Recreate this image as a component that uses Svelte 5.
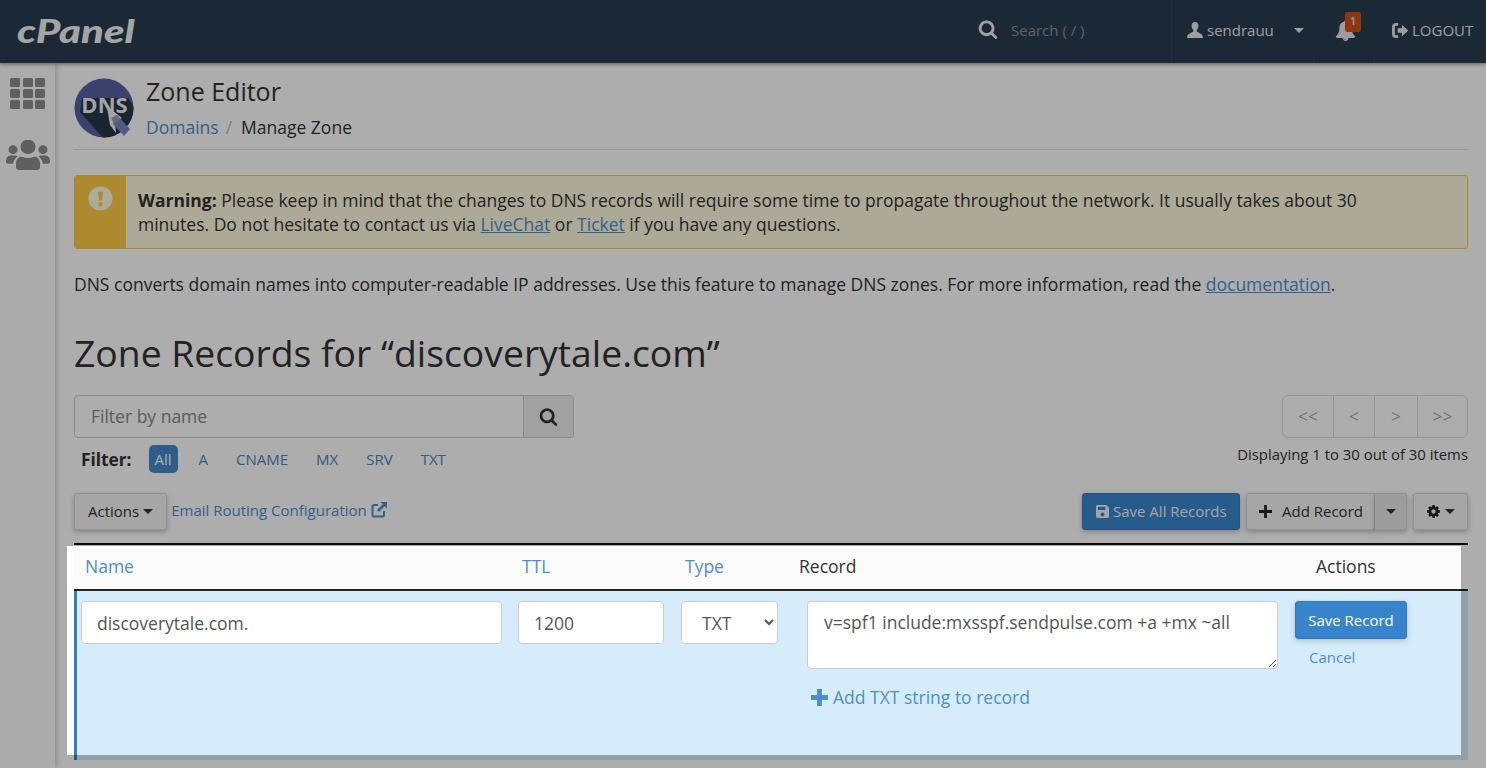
<script>
  const filters = ['A', 'CNAME', 'MX', 'SRV', 'TXT'];
  const pages = ['<<', '<', '>', '>>'];
</script>

<div class="page">
  <header class="nav">
    <span class="logo-wrap"><span class="logo">cPanel</span></span>
    <div class="nav-search">
      <svg class="i-search" viewBox="0 0 1792 1792"><path d="M1216 832q0-185-131.500-316.500t-316.500-131.500-316.500 131.500-131.500 316.500 131.500 316.500 316.500 131.500 316.500-131.500 131.500-316.500zm512 832q0 52-38 90t-90 38q-54 0-90-38l-343-342q-179 124-399 124-143 0-273.500-55.500t-225-150-150-225-55.500-273.500 55.500-273.500 150-225 225-150 273.500-55.500 273.500 55.500 225 150 150 225 55.500 273.500q0 220-124 399l343 343q37 37 37 90z"/></svg>
      <span class="search-ph">Search ( / )</span>
    </div>
    <div class="nav-user">
      <svg class="i-user" viewBox="0 0 16 16"><path d="M8 0C5.800 0 4.600 1.500 4.600 3.800c0 1.700.6 3.100 1.500 4 .3.400.3 1.300 0 1.700C5 10.700 1.200 11.600.6 13.500L0 16h16l-.6-2.500c-.6-1.900-4.400-2.800-5.500-4-.3-.4-.3-1.300 0-1.700.9-.9 1.500-2.300 1.500-4C11.400 1.500 10.200 0 8 0z"/></svg>
      <span>sendrauu</span>
      <i class="caret user-caret"></i>
    </div>
    <div class="nav-bell">
      <svg class="i-bell" viewBox="0 0 1792 1792"><path d="M912 1696q0-16-16-16-59 0-101.500-42.500t-42.500-101.500q0-16-16-16t-16 16q0 73 51.500 124.500t124.500 51.500q16 0 16-16zm816-288q0 52-38 90t-90 38h-448q0 106-75 181t-181 75-181-75-75-181h-448q-52 0-90-38t-38-90q50-42 91-88t85-119.500 74.500-158.500 50-206 19.500-260q0-152 117-282.500t307-158.500q-8-19-8-39 0-40 28-68t68-28 68 28 28 68q0 20-8 39 190 28 307 158.500t117 282.500q0 139 19.500 260t50 206 74.500 158.500 85 119.500 91 88z"/></svg>
      <span class="badge">1</span>
    </div>
    <div class="nav-logout">
      <svg class="i-logout" viewBox="0 0 18 16"><path d="M6.500 1.500H4A2.500 2.500 0 0 0 1.500 4v8A2.500 2.500 0 0 0 4 14.500h2.500" fill="none" stroke="currentColor" stroke-width="3"/><path d="M10.500 2 17.500 8l-7 6v-3.500H6v-5h4.500z"/></svg>
      <span>LOGOUT</span>
    </div>
  </header>

  <div class="shell">
    <aside class="side">
      <div class="grid-icon">
        {#each Array(9) as _}<i></i>{/each}
      </div>
      <svg class="i-users" viewBox="0 0 44 31" preserveAspectRatio="none"><circle cx="22" cy="7" r="7.500"/><circle cx="7" cy="10" r="4.500"/><circle cx="37" cy="10" r="4.500"/><path d="M13 31c-2 0-3-1-3-3v-4c0-4 3-7 6-7 1.500 1 3.500 1.700 6 1.700s4.500-.7 6-1.700c3 0 6 3 6 7v4c0 2-1 3-3 3z"/><path d="M0 22c0-4 2-6 5-6h4c1 0 2 .4 2.800 1-2.800 1.500-4.300 4-4.500 7.500H2c-1.300 0-2-1-2-2.500z"/><path d="M44 22c0-4-2-6-5-6h-4c-1 0-2 .4-2.800 1 2.800 1.500 4.300 4 4.500 7.500H42c1.300 0 2-1 2-2.500z"/></svg>
    </aside>

    <main class="main">
      <section class="head">
        <svg class="dns" viewBox="0 0 60 60">
          <defs><clipPath id="dnsc"><circle cx="30" cy="30" r="29.500"/></clipPath></defs>
          <circle cx="30" cy="30" r="29.500" fill="#56609f"/>
          <g clip-path="url(#dnsc)">
            <path d="M6 34 L8 20 L54 20 L62 32 L62 60 L29 60 Z" fill="#283746"/>
          </g>
          <text x="30.500" y="34.500" text-anchor="middle" class="dns-t">DNS</text>
          <path d="M33 29 L39 33 L48 40 L41 44 L42 55 L36 47z" fill="#f4f4f4"/>
          <path d="M43 37 L56 51 L50 58 L39 46z" fill="#7a86c4"/>
          <path d="M37 40 L43 37 L46 41 L40 46z" fill="#a0a0a0"/>
        </svg>
        <div class="head-text">
          <h2>Zone Editor</h2>
          <div class="crumbs"><a href="#d">Domains</a><span class="sep">/</span><span>Manage Zone</span></div>
        </div>
      </section>

      <section class="alert">
        <div class="alert-band">
          <svg viewBox="0 0 26 26"><circle cx="13" cy="13" r="12.500" fill="#fffbe4"/><path d="M10.600 6h4.800l-.8 9h-3.200zM11 17h4v4h-4z" fill="#ffcc44"/></svg>
        </div>
        <p class="alert-text"><b>Warning:</b> Please keep in mind that the changes to DNS records will require some time to propagate throughout the network. It usually takes about 30 minutes. Do not hesitate to contact us via <a href="#l">LiveChat</a> or <a href="#t">Ticket</a> if you have any questions.</p>
      </section>

      <p class="intro">DNS converts domain names into computer-readable IP addresses. Use this feature to manage DNS zones. For more information, read the <a href="#doc">documentation</a>.</p>

      <h1>Zone Records for “discoverytale.com”</h1>

      <section class="tools">
        <div class="tools-left">
          <div class="filter-box">
            <span class="filter-ph">Filter by name</span>
            <span class="filter-btn"><svg viewBox="0 0 1792 1792"><path d="M1216 832q0-185-131.500-316.500t-316.500-131.500-316.500 131.500-131.500 316.500 131.500 316.500 316.500 131.500 316.500-131.500 131.500-316.500zm512 832q0 52-38 90t-90 38q-54 0-90-38l-343-342q-179 124-399 124-143 0-273.500-55.500t-225-150-150-225-55.500-273.500 55.500-273.500 150-225 225-150 273.500-55.500 273.500 55.500 225 150 150 225 55.500 273.500q0 220-124 399l343 343q37 37 37 90z"/></svg></span>
          </div>
          <div class="filters">
            <b>Filter:</b>
            <span class="pill on">All</span>
            {#each filters as f}<span class="pill">{f}</span>{/each}
          </div>
        </div>
        <div class="tools-right">
          <div class="pager">{#each pages as p}<span>{p}</span>{/each}</div>
          <div class="count">Displaying 1 to 30 out of 30 items</div>
        </div>
      </section>

      <section class="actions">
        <span class="btn">Actions <i class="caret dark"></i></span>
        <a class="email" href="#e">Email Routing Configuration
          <svg viewBox="0 0 16 16"><path d="M7 3H3a1.500 1.500 0 0 0-1.500 1.500v8.500A1.500 1.500 0 0 0 3 14.500h8.500A1.500 1.500 0 0 0 13 13V9" fill="none" stroke="currentColor" stroke-width="2"/><path d="M9.500 0H16v6.500l-2.300-2.300-5.700 5.700-2-2 5.700-5.700z"/></svg>
        </a>
        <span class="spacer"></span>
        <span class="btn primary">
          <svg viewBox="0 0 14 14"><path fill-rule="evenodd" d="M1.500 0H11l3 3v9.500a1.500 1.500 0 0 1-1.500 1.500h-11A1.500 1.500 0 0 1 0 12.500v-11A1.500 1.500 0 0 1 1.500 0zM2 2v3.500h8V2zm5 6a2.200 2.200 0 1 0 0 4.400A2.200 2.200 0 0 0 7 8z"/></svg>
          Save All Records
        </span>
        <span class="split">
          <span class="btn add"><svg viewBox="0 0 14 14"><path d="M5.500 0h3v5.500H14v3H8.500V14h-3V8.500H0v-3h5.500z"/></svg>Add Record</span>
          <span class="btn more"><i class="caret dark"></i></span>
        </span>
        <span class="btn gear">
          <svg viewBox="0 0 1792 1792"><path d="M1152 896q0-106-75-181t-181-75-181 75-75 181 75 181 181 75 181-75 75-181zm512-109v222q0 12-8 23t-20 13l-185 28q-19 54-39 91 35 50 107 138 10 12 10 25t-9 23q-27 37-99 108t-94 71q-12 0-26-9l-138-108q-44 23-91 38-16 136-29 186-7 28-36 28h-222q-14 0-24.500-8.500t-11.500-21.500l-28-184q-49-16-90-37l-141 107q-10 9-25 9-14 0-25-11-126-114-165-168-7-10-7-23 0-12 8-23 15-21 51-66.500t54-70.500q-27-50-41-99l-183-27q-13-2-21-12.500t-8-23.500v-222q0-12 8-23t19-13l186-28q14-46 39-92-40-57-107-138-10-12-10-24 0-10 9-23 26-36 98.500-107.500t94.500-71.500q13 0 26 10l138 107q44-23 91-38 16-136 29-186 7-28 36-28h222q14 0 24.500 8.500t11.500 21.500l28 184q49 16 90 37l142-107q9-9 24-9 13 0 25 10 129 119 165 170 7 8 7 22 0 12-8 23-15 21-51 66.500t-54 70.500q26 50 41 98l183 28q13 2 21 12.500t8 23.500z"/></svg>
          <i class="caret dark"></i>
        </span>
      </section>

      <section class="records">
        <div class="base-head"></div>
        <div class="base-row"></div>

        <div class="spot">
          <div class="spot-inner">
            <div class="thead">
              <a href="#n" class="c-name">Name</a>
              <a href="#ttl" class="c-ttl">TTL</a>
              <a href="#ty" class="c-type">Type</a>
              <span class="c-rec">Record</span>
              <span class="c-act">Actions</span>
            </div>
            <div class="row">
              <input class="f-name" value="discoverytale.com." />
              <input class="f-ttl" value="1200" />
              <select class="f-type"><option>TXT</option></select>
              <div class="rec-cell">
                <textarea class="f-rec">v=spf1 include:mxsspf.sendpulse.com +a +mx ~all</textarea>
                <a class="add-str" href="#a">
                  <svg viewBox="0 0 14 14"><path d="M5 0h4v5h5v4H9v5H5V9H0V5h5z"/></svg>Add TXT string to record
                </a>
              </div>
              <div class="act-cell">
                <span class="save-rec">Save Record</span>
                <a class="cancel" href="#c">Cancel</a>
              </div>
            </div>
          </div>
        </div>
      </section>
    </main>
  </div>

  <div class="overlay"></div>
</div>

<style>
  :global(body) { margin: 0; background: #fff; }
  .page {
    position: relative; width: 1486px; height: 768px; overflow: hidden;
    font-family: "Open Sans", "Noto Sans", sans-serif; color: #333; font-size: 16px;
  }
  a { color: #4c8fd0; text-decoration: none; }
  .overlay { position: absolute; inset: 0; background: rgba(0, 0, 0, .32); z-index: 10; }

  /* nav */
  .nav { height: 63px; background: #293c4f; display: flex; align-items: stretch; color: #e8e8e8; box-shadow: 0 2px 3px rgba(0,0,0,.3); position: relative; z-index: 2; }
  .logo-wrap { flex: 1; padding-left: 17px; min-width: 0; }
  .logo { display: inline-block; font: italic 900 33px/60px Lato, "Open Sans", sans-serif; color: #f4f4f4; transform: scaleX(1.27); transform-origin: left center; }
  .nav-search { width: 193px; flex: none; display: flex; align-items: center; padding-bottom: 3px; box-sizing: border-box; }
  .i-search { width: 20px; height: 20px; fill: #eee; margin-right: 13px; margin-top: -2px; }
  .search-ph { font-size: 15px; color: #8a929a; }
  .nav-user, .nav-bell, .nav-logout { display: flex; flex: none; align-items: center; border-left: 1px solid #31455a; box-sizing: border-box; padding-bottom: 3px; }
  .nav-user { width: 142px; padding-left: 15px; font-size: 15px; gap: 4px; }
  .i-user { width: 16px; height: 16px; fill: #e8e8e8; }
  .caret { display: inline-block; width: 0; height: 0; border: 5px solid transparent; border-bottom: 0; border-top: 5px solid #e8e8e8; }
  .user-caret { margin-left: 16px; border-left-width: 5.500px; border-right-width: 5.500px; }
  .nav-bell { width: 61px; position: relative; padding-left: 21px; }
  .i-bell { width: 21px; height: 21px; fill: #e8e8e8; }
  .badge { position: absolute; left: 31px; top: 12px; width: 16px; height: 20px; border-radius: 2px; background: #d0511a; color: #e8e8e8; font-size: 10px; font-weight: 600; text-align: center; line-height: 18px; }
  .nav-logout { width: 112px; padding-left: 17px; font-size: 15px; gap: 3px; white-space: nowrap; }
  .i-logout { width: 17px; height: 15px; fill: currentColor; }

  /* shell */
  .shell { display: flex; height: 705px; }
  .side { width: 55px; flex: none; background: #fcfcfc; box-shadow: 2px 0 5px rgba(0,0,0,.18); display: flex; flex-direction: column; align-items: center; padding-top: 15px; box-sizing: border-box; }
  .grid-icon { display: grid; grid-template-columns: repeat(3, 10px); grid-auto-rows: 8.500px; gap: 2.500px; width: 35px; }
  .grid-icon i { background: #8c8c8c; border-radius: 1.500px; }
  .i-users { width: 44px; height: 30px; fill: #8c8c8c; margin-top: 31px; }
  .main { flex: 1; padding: 14px 18px 0 19px; min-width: 0; }

  .head { display: flex; gap: 12px; height: 72px; border-bottom: 1px solid #e6e6e6; box-sizing: content-box; }
  .dns { width: 60px; height: 60px; flex: none; margin-top: 1px; }
  .dns-t { font: 700 22px "Open Sans", sans-serif; fill: #f2f2f2; }
  .head-text h2 { margin: 0; font-size: 25px; font-weight: 400; line-height: 28px; }
  .crumbs { margin-top: 9px; font-size: 17.500px; line-height: 26px; display: flex; }
  .sep { color: #bbb; margin: 0 9px 0 7px; }

  .alert { margin-top: 25px; display: flex; height: 74px; border: 1px solid #f7c948; border-radius: 3px; background: #fffadf; box-sizing: border-box; overflow: hidden; }
  .alert-band { width: 52px; flex: none; background: #ffcc44; display: flex; justify-content: center; align-items: flex-start; padding-top: 11px; box-sizing: border-box; margin: -1px 0 -1px -1px; }
  .alert-band svg { width: 25px; height: 25px; }
  .alert-text { margin: 0; padding: 12px 60px 0 12px; font-size: 17.500px; line-height: 24px; }
  .alert-text a, .intro a { text-decoration: underline; color: #4c8fd0; }

  .intro { margin: 23px 0 0; font-size: 17.500px; line-height: 25px; }
  h1 { margin: 31px 0 0; font-size: 37.300px; font-weight: 400; line-height: 50px; }

  .tools { display: flex; justify-content: space-between; margin-top: 17px; height: 87px; }
  .filter-box { width: 500px; height: 43px; border: 1px solid #ccc; border-radius: 4px; display: flex; box-sizing: border-box; overflow: hidden; background: #fff; }
  .filter-ph { flex: 1; font-size: 17.500px; color: #888; line-height: 41px; padding-left: 16px; }
  .filter-btn { width: 49px; background: #eee; border-left: 1px solid #ccc; display: flex; align-items: center; justify-content: center; }
  .filter-btn svg { width: 19px; height: 19px; fill: #333; }
  .filters { display: flex; align-items: center; margin-top: 7px; height: 28px; padding-left: 7px; font-size: 15px; }
  .filters b { font-size: 17.300px; margin-right: 17px; }
  .pill { color: #4a86c0; padding: 0 14px; line-height: 28px; border-radius: 5px; }
  .pill.on { background: #428bca; color: #fff; padding: 0; width: 29px; text-align: center; margin-right: 7px; }

  .tools-right { display: flex; flex-direction: column; align-items: flex-end; }
  .pager { display: flex; height: 43px; border: 1px solid #ddd; border-radius: 6px; box-sizing: border-box; color: #aaa; font-size: 17.500px; }
  .pager span { width: 41px; text-align: center; line-height: 40px; border-left: 1px solid #ddd; box-sizing: border-box; }
  .pager span:first-child { border-left: 0; width: 50px; }
  .pager span:nth-child(3) { width: 43px; }
  .pager span:last-child { width: 50px; }
  .count { margin-top: 6px; font-size: 14.900px; line-height: 20px; }

  .actions { display: flex; align-items: flex-start; margin-top: 11px; height: 50px; }
  .btn { display: inline-flex; align-items: center; height: 37px; box-sizing: border-box; border: 1px solid #d8d8d8; border-radius: 3px; background: #f5f5f5; box-shadow: 0 2px 5px rgba(0,0,0,.25); font-size: 15px; padding: 0 13px 1px; gap: 4px; white-space: nowrap; }
  .caret.dark { border-top-color: #333; }
  .email { font-size: 15px; margin: 7px 0 0 4px; display: inline-flex; align-items: center; gap: 4px; line-height: 20px; }
  .email svg { width: 16px; height: 16px; fill: currentColor; }
  .spacer { flex: 1; }
  .primary { background: #3a87cd; border-color: #3078bd; color: #f2f2f2; margin-right: 6px; width: 158px; padding: 0 0 1px 13px; }
  .primary svg { width: 13px; height: 13px; fill: #f2f2f2; }
  .split { display: inline-flex; margin-right: 6px; }
  .add { border-radius: 3px 0 0 3px; width: 129px; padding: 0 0 1px 12px; gap: 10px; }
  .add svg { width: 13px; height: 13px; fill: #222; }
  .more { border-left: 0; border-radius: 0 3px 3px 0; width: 32px; padding: 0; justify-content: center; background: #e8e8e8; }
  .gear { width: 55px; padding: 0; justify-content: center; }
  .gear svg { width: 15px; height: 15px; fill: #222; }

  /* records */
  .records { position: relative; height: 217px; border-top: 2px solid #111; box-sizing: border-box; }
  .base-head { height: 44px; border-bottom: 2px solid #222; background: #fff; }
  .base-row { height: 169px; background: #d7ecfa; border-left: 3px solid #2f7ebd; }
  .spot { position: absolute; left: -7px; top: 1px; width: 1394px; height: 209px; z-index: 11; background: #fff; overflow: hidden; }
  .spot-inner { margin-left: 7px; width: 1394px; }
  .thead { height: 45px; border-bottom: 2px solid #222; background: #fbfbfb; position: relative; font-size: 17.500px; line-height: 41px; box-sizing: border-box; }
  .thead > * { position: absolute; top: 0; }
  .c-name { left: 11px; } .c-ttl { left: 448px; } .c-type { left: 611px; } .c-rec { left: 725px; } .c-act { left: 1242px; }
  .row { height: 170px; background: #d7ecfa; border-left: 3px solid #2f7ebd; display: flex; align-items: flex-start; padding: 10px 0 0 4px; box-sizing: border-box; }
  input, select, textarea { font: 17.500px "Open Sans", sans-serif; color: #555; background: #fff; border: 1px solid #ccc; border-radius: 4px; box-sizing: border-box; margin: 0; outline: 0; }
  .f-name { width: 421px; height: 43px; padding: 0 15px; }
  .f-ttl { width: 146px; height: 43px; margin-left: 16px; padding: 0 15px; }
  .f-type { width: 97px; height: 43px; margin-left: 17px; padding: 0 16px; }
  .rec-cell { margin-left: 29px; width: 471px; }
  .f-rec { display: block; width: 471px; height: 68px; padding: 8px 16px; }
  .add-str { display: flex; align-items: center; font-size: 17.500px; line-height: 24px; margin: 16px 0 0 4px; gap: 5px; }
  .add-str svg { width: 17px; height: 17px; fill: #4c8fd0; }
  .act-cell { margin-left: 17px; }
  .save-rec { display: block; width: 112px; height: 38px; border: 1px solid #2f78bd; background: #3784cd; color: #fff; font-size: 15px; line-height: 36px; text-align: center; border-radius: 3px; box-sizing: border-box; box-shadow: 0 2px 6px rgba(0,0,0,.2); }
  .cancel { display: block; font-size: 15px; margin: 8px 0 0 14px; line-height: 20px; }
</style>
